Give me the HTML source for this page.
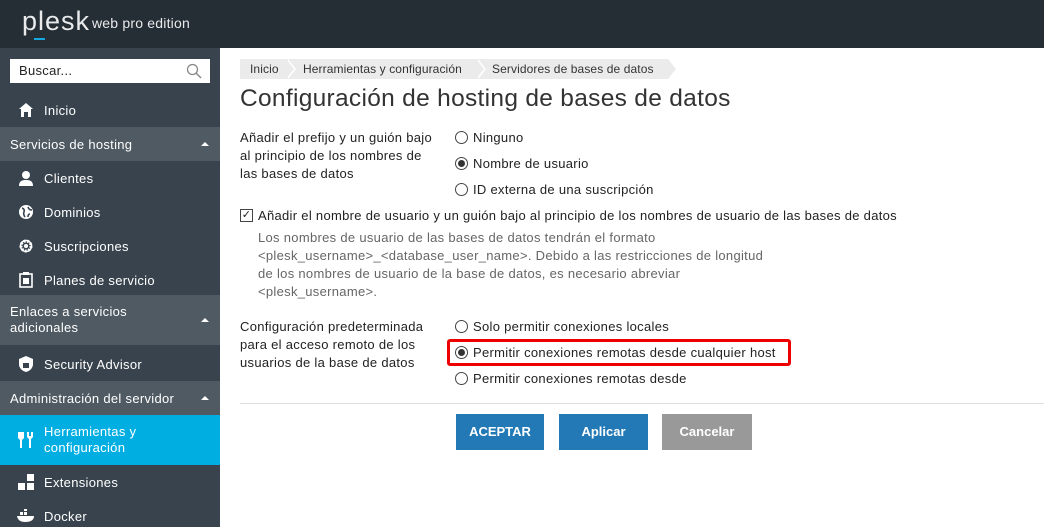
<!DOCTYPE html>
<html><head><meta charset="utf-8"><style>
*{box-sizing:border-box;margin:0;padding:0}
body{width:1044px;height:527px;overflow:hidden;font-family:"Liberation Sans",sans-serif;font-size:13px;color:#222;background:#fff;position:relative;letter-spacing:0.3px}
.hdr{position:absolute;left:0;top:0;width:1044px;height:48px;background:#252d35}
.logo{position:absolute;left:22px;top:6px;color:#e8eaec;font-size:27px;letter-spacing:1px}
.logo small{font-size:14px;position:absolute;left:70px;top:9px;letter-spacing:0.2px;white-space:nowrap}
.logo i{position:absolute;left:12px;top:32px;width:11px;height:2px;background:#17a8e0}
.side{position:absolute;left:0;top:48px;width:220px;height:479px;background:#38434d;color:#fff}
.search{position:absolute;left:10px;top:11px;width:200px;height:24px;background:#fff;color:#222;padding:4px 9px;font-size:13px}
.it{position:absolute;left:0;width:220px;display:flex;align-items:center;padding-left:44px;font-size:13px}
.it .ic{position:absolute;left:17px;top:0;bottom:0;width:18px;display:flex;align-items:center;justify-content:center;font-size:17px;font-weight:bold}
.sec{position:absolute;left:0;width:220px;background:#4f5a63;padding-left:10px;display:flex;align-items:center;font-size:13px}
.sec:after{content:"";position:absolute;right:11px;top:50%;margin-top:-2px;border:4px solid transparent;border-bottom-color:#fff;border-top:0}
.bc{position:absolute;top:59px;height:20px;background:#ebebeb;color:#333;font-size:12px;line-height:20px;padding-left:10px;letter-spacing:0.1px}
.sep{position:absolute;top:59px;width:0;height:0;border-top:10px solid transparent;border-bottom:10px solid transparent;border-left:8px solid #fff}
.sep:after{content:"";position:absolute;left:-10px;top:-10px;border-top:10px solid transparent;border-bottom:10px solid transparent;border-left:8px solid #ebebeb}
h1{position:absolute;left:240px;top:85px;font-weight:normal;font-size:24.5px;color:#333;letter-spacing:0.3px}
.t{position:absolute;white-space:nowrap;line-height:18px}
.r{position:absolute;width:13px;height:13px;border:1px solid #444;border-radius:50%}
.r.on:after{content:"";position:absolute;left:2px;top:2px;width:7px;height:7px;border-radius:50%;background:#333}
.g{color:#666}
.btn{position:absolute;top:414px;height:36px;color:#fff;font-weight:bold;font-size:13px;text-align:center;line-height:36px;letter-spacing:0}
</style></head><body>
<div class="hdr"><div class="logo">plesk<i></i><small>web pro edition</small></div></div>
<div class="side">
<div class="search">Buscar...<svg style="position:absolute;right:8px;top:4px" width="16" height="16"><circle cx="6.5" cy="6.5" r="5" fill="none" stroke="#888" stroke-width="1.3"/><path d="M10 10l5 5" stroke="#888" stroke-width="1.5"/></svg></div>
<div class="it" style="top:50px;height:24px"><span class="ic"><svg width="16" height="16"><path d="M8 1l7 6h-2v8h-3v-5H6v5H3V7H1z" fill="#fff"/></svg></span>Inicio</div>
<div class="sec" style="top:79px;height:34px">Servicios de hosting</div>
<div class="it" style="top:118px;height:24px"><span class="ic"><svg width="16" height="16"><circle cx="8" cy="5" r="4" fill="#fff"/><path d="M1 16c0-5 3-6 7-6s7 1 7 6z" fill="#fff"/></svg></span>Clientes</div>
<div class="it" style="top:152px;height:24px"><span class="ic"><svg width="16" height="16"><circle cx="8" cy="8" r="7" fill="#fff"/><path d="M4 4q3 1 2 4q-1 2 1 5M10 3q1 3 4 3M12 10q-2 0-2 3" stroke="#38434d" stroke-width="1.6" fill="none"/></svg></span>Dominios</div>
<div class="it" style="top:186px;height:24px"><span class="ic"><svg width="16" height="16"><circle cx="8" cy="8" r="5" fill="none" stroke="#fff" stroke-width="3" stroke-dasharray="2 1.5"/><circle cx="8" cy="8" r="5.5" fill="none" stroke="#fff" stroke-width="1.5"/><circle cx="8" cy="8" r="2" fill="#fff"/></svg></span>Suscripciones</div>
<div class="it" style="top:220px;height:24px"><span class="ic"><svg width="16" height="16"><rect x="2" y="2" width="12" height="13" fill="none" stroke="#fff" stroke-width="1.6"/><rect x="5" y="0" width="6" height="3" fill="#fff"/><rect x="5" y="6" width="6" height="6" fill="#fff"/></svg></span>Planes de servicio</div>
<div class="sec" style="top:247px;height:50px;line-height:16px">Enlaces a servicios<br>adicionales</div>
<div class="it" style="top:304px;height:24px"><span class="ic"><svg width="16" height="16"><path d="M8 0l7 3v5c0 4-3 7-7 8c-4-1-7-4-7-8V3z" fill="#fff"/><rect x="5" y="7" width="6" height="5" fill="#38434d"/></svg></span>Security Advisor</div>
<div class="sec" style="top:333px;height:34px">Administración del servidor</div>
<div class="it" style="top:367px;height:50px;background:#00aee2;line-height:16px"><span class="ic"><svg width="18" height="16"><path d="M1 0h6v6l-2 2v8H3V8L1 6z" fill="#fff"/><path d="M10 0h2v4h2V0h2v5l-2 2v9h-2V7l-2-2z" fill="#fff"/></svg></span>Herramientas y<br>configuración</div>
<div class="it" style="top:422px;height:24px"><span class="ic"><svg width="16" height="16"><rect x="9" y="0" width="7" height="7" fill="#fff"/><rect x="0" y="9" width="7" height="7" fill="#fff"/><rect x="9" y="9" width="7" height="7" fill="#fff"/></svg></span>Extensiones</div>
<div class="it" style="top:456px;height:24px"><span class="ic"><svg width="18" height="14"><path d="M0 7h17q0 6-9 6q-7 0-8-6z" fill="#fff"/><rect x="3" y="3" width="3" height="3" fill="#fff"/><rect x="7" y="3" width="3" height="3" fill="#fff"/><rect x="7" y="0" width="3" height="2" fill="#fff"/></svg></span>Docker</div>
</div>
<div class="bc" style="left:240px;width:56px">Inicio</div>
<div class="bc" style="left:293px;width:193px">Herramientas y configuración</div>
<div class="bc" style="left:482px;width:186px">Servidores de bases de datos</div>
<div class="sep" style="left:288px"></div>
<div class="sep" style="left:478px"></div>
<div class="sep" style="left:668px;border-left-color:#ebebeb"></div>
<h1>Configuración de hosting de bases de datos</h1>
<div class="t" style="left:240px;top:129px">Añadir el prefijo y un guión bajo<br>al principio de los nombres de<br>las bases de datos</div>
<div class="r" style="left:455px;top:131px"></div><div class="t" style="left:473px;top:129px">Ninguno</div>
<div class="r on" style="left:455px;top:157px"></div><div class="t" style="left:473px;top:155px">Nombre de usuario</div>
<div class="r" style="left:455px;top:183px"></div><div class="t" style="left:473px;top:181px">ID externa de una suscripción</div>
<div style="position:absolute;left:240px;top:209px;width:13px;height:13px;border:1px solid #444;font-size:11px;line-height:11px;text-align:center">✓</div>
<div class="t" style="left:258px;top:207px">Añadir el nombre de usuario y un guión bajo al principio de los nombres de usuario de las bases de datos</div>
<div class="t g" style="left:258px;top:229px">Los nombres de usuario de las bases de datos tendrán el formato<br>&lt;plesk_username&gt;_&lt;database_user_name&gt;. Debido a las restricciones de longitud<br>de los nombres de usuario de la base de datos, es necesario abreviar<br>&lt;plesk_username&gt;.</div>
<div class="t" style="left:240px;top:318px">Configuración predeterminada<br>para el acceso remoto de los<br>usuarios de la base de datos</div>
<div class="r" style="left:455px;top:320px"></div><div class="t" style="left:473px;top:318px">Solo permitir conexiones locales</div>
<div style="position:absolute;left:447px;top:339px;width:344px;height:27px;border:3px solid #e00;border-radius:3px"></div>
<div class="r on" style="left:455px;top:346px"></div><div class="t" style="left:473px;top:344px">Permitir conexiones remotas desde cualquier host</div>
<div class="r" style="left:455px;top:372px"></div><div class="t" style="left:473px;top:370px">Permitir conexiones remotas desde</div>
<div style="position:absolute;left:240px;top:403px;width:804px;height:1px;background:#ddd"></div>
<div class="btn" style="left:456px;width:88px;background:#2279b6">ACEPTAR</div>
<div class="btn" style="left:559px;width:89px;background:#2279b6">Aplicar</div>
<div class="btn" style="left:662px;width:90px;background:#999">Cancelar</div>
</body></html>
